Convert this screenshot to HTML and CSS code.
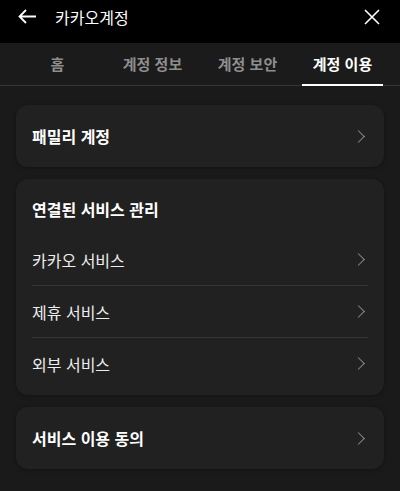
FILE: index.html
```html
<!DOCTYPE html>
<html lang="ko">
<head>
  <meta charset="UTF-8">
  <meta name="viewport" content="width=device-width, initial-scale=1.0">
  <title>카카오계정</title>
  <link rel="stylesheet" href="styles.css">
</head>
<body>
  <!-- 상단 바 -->
  <header class="topbar">
    <button class="icon-btn back">
      <svg width="18" height="15" viewBox="0 0 18 15" fill="none" stroke="#fff" stroke-width="1.8">
        <path d="M18 7.5H1.5M8 1L1.5 7.5L8 14"/>
      </svg>
    </button>
    <span class="title">카카오계정</span>
    <button class="icon-btn close">
      <svg width="16" height="16" viewBox="0 0 16 16" fill="none" stroke="#fff" stroke-width="1.6">
        <path d="M1 1L15 15M15 1L1 15"/>
      </svg>
    </button>
  </header>

  <!-- 탭 -->
  <nav class="tabs">
    <a class="tab">홈</a>
    <a class="tab">계정 정보</a>
    <a class="tab">계정 보안</a>
    <a class="tab active">계정 이용</a>
  </nav>

  <main class="content">
    <section class="card">
      <div class="row strong">
        <span>패밀리 계정</span>
        <span class="chevron"></span>
      </div>
    </section>

    <section class="card">
      <h3 class="card-title">연결된 서비스 관리</h3>
      <ul class="list">
        <li class="row"><span>카카오 서비스</span><span class="chevron"></span></li>
        <li class="row"><span>제휴 서비스</span><span class="chevron"></span></li>
        <li class="row"><span>외부 서비스</span><span class="chevron"></span></li>
      </ul>
    </section>

    <section class="card">
      <div class="row strong">
        <span>서비스 이용 동의</span>
        <span class="chevron"></span>
      </div>
    </section>
  </main>
</body>
</html>
```

FILE: styles.css
```css
body {
  margin: 0;
  background-color: #1a1a1a;
  color: #fff;
  font-family: "Noto Sans CJK KR", "Noto Sans", sans-serif;
}
.topbar {
  display: flex;
  align-items: center;
  height: 43px;
  padding: 0 18px;
  background-color: #000;
  box-sizing: border-box;
}
.icon-btn {
  display: flex;
  padding: 0;
  border: none;
  background: none;
}
.back {
  margin-top: -10px;
}
.title {
  flex: 1;
  margin-left: 19px;
  margin-top: -10px;
  font-size: 16px;
}
.close {
  margin-top: -10px;
  margin-right: 2px;
}
.tabs {
  display: flex;
  height: 43px;
  padding: 0 10px;
  background-color: #1b1b1b;
  border-bottom: 1px solid #353535;
  box-sizing: border-box;
}
.tab {
  flex: 1;
  display: flex;
  align-items: center;
  justify-content: center;
  margin: 0 7px -1px;
  font-size: 15px;
  font-weight: bold;
  color: #8e8e8e;
  border-bottom: 2px solid transparent;
}
.tab.active {
  color: #fff;
  border-bottom-color: #fff;
}
.content {
  display: flex;
  flex-direction: column;
  gap: 12px;
  padding: 19px 16px;
}
.card {
  background-color: #212121;
  border-radius: 12px;
  padding: 0 16px;
  box-shadow: 0 1px 4px rgba(0, 0, 0, 0.3);
}
.card-title {
  margin: 0;
  padding-top: 18px;
  height: 37px;
  font-size: 16px;
  font-weight: bold;
  line-height: 25px;
  box-sizing: content-box;
}
.list {
  list-style: none;
  margin: 0;
  padding: 0 0 6px;
}
.row {
  display: flex;
  align-items: center;
  justify-content: space-between;
  height: 51px;
  font-size: 16px;
  color: #eee;
}
.list .row + .row {
  border-top: 1px solid #353535;
}
.row.strong {
  height: 62px;
  font-weight: bold;
  color: #fff;
}
.chevron {
  width: 8px;
  height: 8px;
  margin-right: 5px;
  border-top: 1.2px solid #8a8a8a;
  border-right: 1.2px solid #8a8a8a;
  transform: rotate(45deg);
}
```
